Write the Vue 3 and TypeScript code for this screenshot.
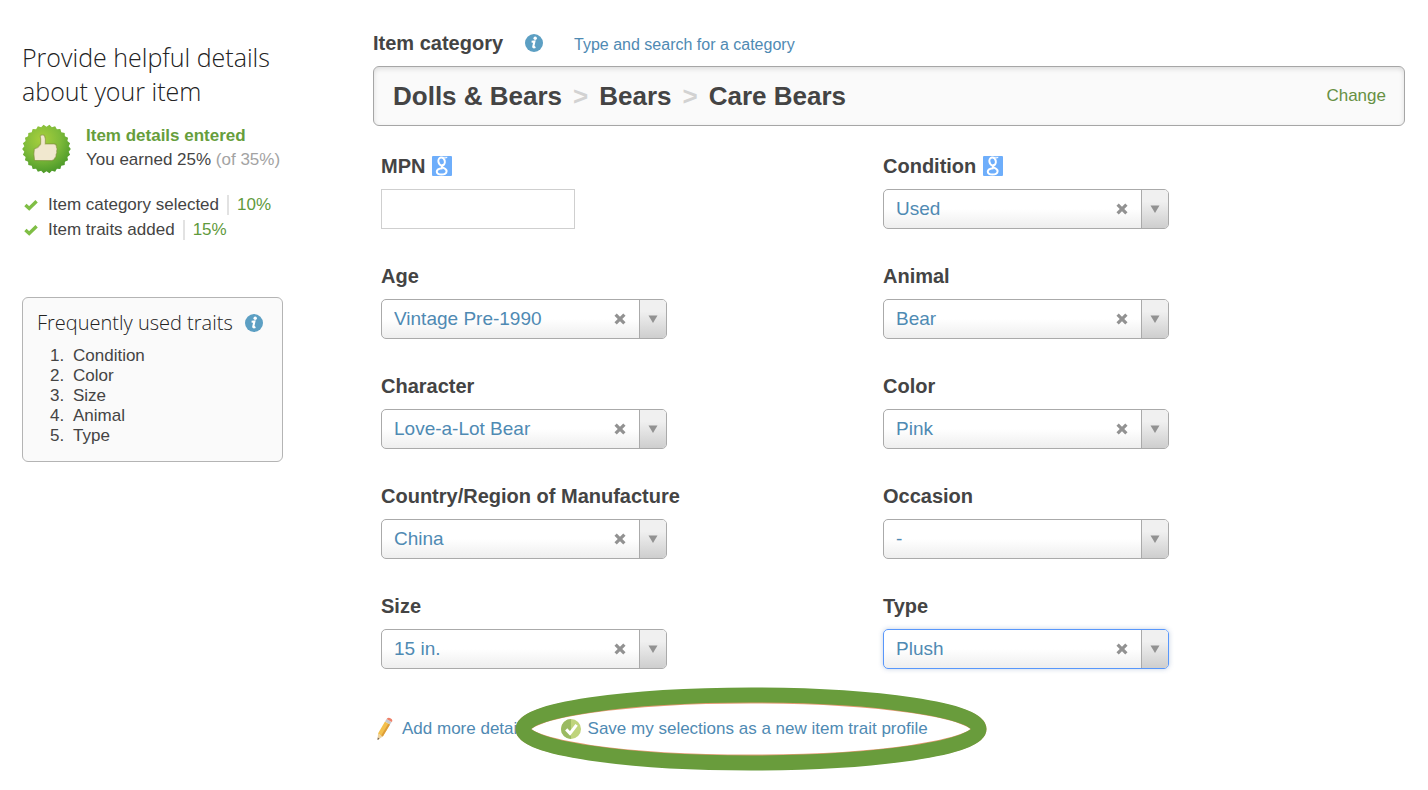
<script setup lang="ts">
import { reactive } from 'vue'

interface TraitField {
  id: string
  label: string
  kind: 'text' | 'select'
  value: string
  options?: string[]
  lookup?: boolean
  active?: boolean
}

const fields = reactive<TraitField[]>([
  { id: 'mpn', label: 'MPN', kind: 'text', value: '', lookup: true },
  { id: 'condition', label: 'Condition', kind: 'select', value: 'Used', options: ['Used'], lookup: true },
  { id: 'age', label: 'Age', kind: 'select', value: 'Vintage Pre-1990', options: ['Vintage Pre-1990'] },
  { id: 'animal', label: 'Animal', kind: 'select', value: 'Bear', options: ['Bear'] },
  { id: 'character', label: 'Character', kind: 'select', value: 'Love-a-Lot Bear', options: ['Love-a-Lot Bear'] },
  { id: 'color', label: 'Color', kind: 'select', value: 'Pink', options: ['Pink'] },
  { id: 'country', label: 'Country/Region of Manufacture', kind: 'select', value: 'China', options: ['China'] },
  { id: 'occasion', label: 'Occasion', kind: 'select', value: '-', options: [] },
  { id: 'size', label: 'Size', kind: 'select', value: '15 in.', options: ['15 in.'] },
  { id: 'type', label: 'Type', kind: 'select', value: 'Plush', options: ['Plush'], active: true },
])

const category = ['Dolls & Bears', 'Bears', 'Care Bears']
const progress = [
  { text: 'Item category selected', percent: '10%' },
  { text: 'Item traits added', percent: '15%' },
]
const frequent = ['Condition', 'Color', 'Size', 'Animal', 'Type']

// Scalloped rim of the badge: alternating outer and inner radii.
const teeth = 26
const badgePoints = Array.from({ length: teeth * 2 }, (_, i) => {
  const r = i % 2 === 0 ? 24.8 : 22.8
  const a = (Math.PI * i) / teeth
  return `${(25 + r * Math.cos(a)).toFixed(2)},${(25 + r * Math.sin(a)).toFixed(2)}`
}).join(' ')
</script>

<template>
  <div class="page">
    <aside class="sidebar">
      <h1>Provide helpful details about your item</h1>

      <div class="earned">
        <svg class="badge" viewBox="0 0 50 50" aria-hidden="true">
          <defs>
            <radialGradient id="badgeFill" cx="0.4" cy="0.3" r="0.75">
              <stop offset="0" stop-color="#a8cf3c" />
              <stop offset="0.5" stop-color="#7fbb3a" />
              <stop offset="1" stop-color="#459527" />
            </radialGradient>
          </defs>
          <polygon :points="badgePoints" fill="url(#badgeFill)" />
          <path
            d="M12.6 25 Q17 23.5 19 20 Q19.4 14.5 18.6 11.8 Q20.5 9.6 22.8 11.3 Q24.6 14.5 23.8 19.8 L33 19.8 Q35.8 20.6 35.2 23.2 Q36.4 25 35.4 27 Q36 29 34.8 30.6 Q35.2 33 33.6 34.2 Q33 36.6 30.5 36.8 L12.8 36.6 Q11.4 30 12.6 25 Z"
            fill="#f1e8cf"
            stroke="#7d8a3a"
            stroke-opacity="0.55"
            stroke-width="1.2"
          />
        </svg>
        <p>
          <strong>Item details entered</strong><br />
          You earned 25% <span class="muted">(of 35%)</span>
        </p>
      </div>

      <ul class="progress">
        <li v-for="p in progress" :key="p.text">
          <svg viewBox="0 0 14 12" aria-hidden="true">
            <path d="M1.4 6 L5.2 9.4 L12.6 2.2" fill="none" stroke="#7fbe45" stroke-width="3.4" />
          </svg>
          <span>{{ p.text }}</span>
          <span class="percent">{{ p.percent }}</span>
        </li>
      </ul>

      <section class="frequent">
        <h2>
          Frequently used traits
          <svg class="info" viewBox="0 0 18 18" aria-hidden="true">
            <circle cx="9" cy="9" r="9" fill="#5c9fc3" />
            <circle cx="10.2" cy="4.3" r="1.7" fill="#fff" />
            <path d="M6.6 7.7 L9.4 7.5 L8.2 13 Q8.5 13.8 10.4 13" fill="none" stroke="#fff" stroke-width="2.1" />
          </svg>
        </h2>
        <ol>
          <li v-for="name in frequent" :key="name">{{ name }}</li>
        </ol>
      </section>
    </aside>

    <main>
      <header class="category-head">
        <h2>Item category</h2>
        <svg class="info" viewBox="0 0 18 18" aria-hidden="true">
          <circle cx="9" cy="9" r="9" fill="#5c9fc3" />
          <circle cx="10.2" cy="4.3" r="1.7" fill="#fff" />
          <path d="M6.6 7.7 L9.4 7.5 L8.2 13 Q8.5 13.8 10.4 13" fill="none" stroke="#fff" stroke-width="2.1" />
        </svg>
        <a href="#search">Type and search for a category</a>
      </header>

      <nav class="category-bar" aria-label="Item category">
        <div class="crumbs">
          <template v-for="(c, i) in category" :key="c">
            <span v-if="i > 0" class="sep">&gt;</span>
            <span>{{ c }}</span>
          </template>
        </div>
        <a href="#change">Change</a>
      </nav>

      <form class="fields" @submit.prevent>
        <div v-for="f in fields" :key="f.id" class="field">
          <label :for="f.id">
            {{ f.label }}
            <svg v-if="f.lookup" class="lookup" viewBox="0 0 20 20" aria-hidden="true">
              <rect width="20" height="20" rx="1" fill="#6eaefb" />
              <g fill="none" stroke="#fff">
                <ellipse cx="9.6" cy="5.4" rx="3.2" ry="4" stroke-width="2" transform="rotate(-12 9.6 5.4)" />
                <path d="M9.6 1.3 L15.2 1.3 L13.4 2.3" stroke-width="0.9" />
                <path d="M12 8 C11.4 9.6 9.2 9.6 9.8 10.8 C10.4 12 14.8 12.4 14.6 15.2 C14.4 17.6 11.8 18.6 9.4 18.6 C6.6 18.6 4.8 17.4 4.8 15.6 C4.8 13.4 7.4 12.4 10.6 12.2" stroke-width="2" />
              </g>
            </svg>
          </label>
          <input v-if="f.kind === 'text'" :id="f.id" v-model="f.value" type="text" />
          <div v-else class="combo" :class="{ active: f.active }">
            <select :id="f.id" v-model="f.value">
              <option value="-">-</option>
              <option v-for="o in f.options" :key="o" :value="o">{{ o }}</option>
            </select>
            <button
              v-if="f.value !== '-'"
              type="button"
              :aria-label="`Clear ${f.label}`"
              @click="f.value = '-'"
            >
              <svg viewBox="0 0 12 12" aria-hidden="true">
                <path d="M1.6 1.6 L10.4 10.4 M10.4 1.6 L1.6 10.4" stroke="#929292" stroke-width="3.2" />
              </svg>
            </button>
            <span class="arrow">
              <svg viewBox="0 0 10 8" aria-hidden="true">
                <path d="M0.5 0.5 H9.5 L5 8 Z" fill="#929292" />
              </svg>
            </span>
          </div>
        </div>
      </form>

      <footer>
        <a href="#more" class="more">
          <svg class="pencil" viewBox="0 0 18 24" aria-hidden="true">
            <path d="M1.6 23 L2 16.6 L6.8 19.6 Z" fill="#ecd2a0" />
            <path d="M1.6 23 L1.7 20.6 L3.5 21.8 Z" fill="#6b5a48" />
            <path d="M2 16.6 L9 4.6 L14 7.6 L6.8 19.6 Z" fill="#f3c04c" />
            <path d="M5.2 18.6 L12.4 6.6 L14 7.6 L6.8 19.6 Z" fill="#dc9c38" />
            <path d="M9 4.6 L10.6 2 L15.6 5 L14 7.6 Z" fill="#c6c9cc" />
            <path d="M10.6 2 Q12.2 0 14.8 1.4 Q17.4 3 15.6 5 Z" fill="#ee8069" />
          </svg>
          Add more details
        </a>
        <a href="#save" class="save">
          <svg class="saved" viewBox="0 0 20 20" aria-hidden="true">
            <circle cx="10" cy="10" r="10" fill="#bfd47c" />
            <path d="M10 0 A10 10 0 0 0 10 20 Z" fill="#9aba62" />
            <path d="M5.2 10.4 L9 14.4 L15.6 5.8" fill="none" stroke="#fff" stroke-width="3" />
          </svg>
          Save my selections as a new item trait profile
          <svg class="ring" viewBox="0 0 472 84" preserveAspectRatio="none" aria-hidden="true">
            <ellipse cx="236" cy="42" rx="228" ry="33" fill="none" stroke="#e39a72" stroke-width="15" />
            <ellipse cx="236" cy="42" rx="228" ry="34" fill="none" stroke="#699c3c" stroke-width="15" />
          </svg>
        </a>
      </footer>
    </main>
  </div>
</template>

<style>
body {
  margin: 0;
  background: #fff;
}
</style>

<style scoped>
.page {
  display: grid;
  grid-template-columns: 264px 1fr;
  column-gap: 87px;
  padding: 30px 23px 30px 22px;
  font: 17px/24px "Liberation Sans", Arial, sans-serif;
  color: #444;
}
h1,
h2,
p,
ul,
ol {
  margin: 0;
  padding: 0;
}
ul,
ol {
  list-style: none;
}
a {
  color: #4f8ab3;
  text-decoration: none;
}
.sidebar {
  padding-top: 10px;
}
h1 {
  font: 300 25px/34px "Open Sans", sans-serif;
  color: #222;
}
.earned {
  display: flex;
  gap: 15px;
  margin-top: 16px;
  white-space: nowrap;
}
.badge {
  flex: none;
  width: 49px;
  height: 50px;
}
.earned strong {
  color: #669e3c;
}
.muted {
  color: #a3a3a3;
}
.progress {
  display: grid;
  gap: 1px;
  margin-top: 19px;
}
.progress li {
  display: flex;
  align-items: center;
}
.progress svg {
  width: 14px;
  height: 12px;
  margin: 0 10px 0 2px;
}
.percent {
  margin-left: 8px;
  padding-left: 8px;
  border-left: 2px solid #e2e2e2;
  line-height: 20px;
  color: #5f9a3c;
}
.frequent {
  width: 261px;
  box-sizing: border-box;
  margin-top: 55px;
  padding: 13px 14px 15px;
  border: 1px solid #b4b4b4;
  border-radius: 6px;
  background: #fafafa;
}
.frequent h2 {
  display: flex;
  align-items: center;
  gap: 12px;
  white-space: nowrap;
  font: 300 20px/24px "Open Sans", sans-serif;
  color: #222;
}
.info {
  flex: none;
  width: 18px;
  height: 18px;
}
.frequent ol {
  margin-top: 11px;
  padding-left: 13px;
  line-height: 20px;
  counter-reset: trait;
}
.frequent li {
  display: flex;
  counter-increment: trait;
}
.frequent li::before {
  content: counter(trait) ".";
  width: 23px;
}
.category-head {
  display: flex;
  align-items: center;
  height: 26px;
  margin-bottom: 10px;
}
.category-head h2 {
  font-size: 20px;
}
.category-head .info {
  margin: 0 31px 0 22px;
}
.category-head a {
  font-size: 16px;
  padding-top: 3px;
}
.category-bar {
  display: flex;
  align-items: center;
  justify-content: space-between;
  padding: 13px 18px 13px 19px;
  border: 1px solid #a6a6a6;
  border-radius: 6px;
  background: #fafafa;
  box-shadow: inset 0 2px 5px rgba(0, 0, 0, 0.12);
}
.crumbs {
  display: flex;
  gap: 11px;
  font-size: 26px;
  line-height: 32px;
  font-weight: 700;
}
.sep {
  color: #d2d2d2;
}
.category-bar a {
  color: #669043;
}
.fields {
  display: grid;
  grid-template-columns: 1fr 1fr;
  row-gap: 35px;
  padding: 28px 20px 0 8px;
}
.field label {
  display: flex;
  align-items: center;
  gap: 7px;
  margin-bottom: 11px;
  font-size: 20px;
  font-weight: 700;
}
.lookup {
  width: 20px;
  height: 20px;
}
.field input {
  box-sizing: border-box;
  display: block;
  width: 194px;
  height: 40px;
  padding: 0 12px;
  border: 1px solid #cfcfcf;
  font: 19px "Liberation Sans", Arial, sans-serif;
  color: #4f8ab3;
}
.combo {
  position: relative;
  box-sizing: border-box;
  width: 286px;
  height: 40px;
  border: 1px solid #aaa;
  border-radius: 5px;
  background: linear-gradient(#fff 50%, #eee);
}
.combo.active {
  border-color: #5897fb;
  box-shadow: 0 0 5px rgba(60, 100, 160, 0.3);
}
.combo select {
  appearance: none;
  display: block;
  width: 100%;
  height: 100%;
  padding: 0 60px 2px 12px;
  border: 0;
  outline: 0;
  background: transparent;
  font: 19px "Liberation Sans", Arial, sans-serif;
  color: #4f8ab3;
}
.combo button {
  position: absolute;
  top: 0;
  right: 34px;
  display: grid;
  place-items: center;
  width: 24px;
  height: 38px;
  padding: 0;
  border: 0;
  background: none;
}
.combo button svg {
  width: 12px;
  height: 12px;
}
.arrow {
  position: absolute;
  top: 0;
  right: 0;
  display: grid;
  place-items: center;
  width: 26px;
  height: 38px;
  border-left: 1px solid #aaa;
  border-radius: 0 4px 4px 0;
  background: linear-gradient(#f0f0f0 30%, #cecece);
  pointer-events: none;
}
.arrow svg {
  width: 10px;
  height: 8px;
}
footer {
  display: flex;
  gap: 31px;
  margin-top: 48px;
  padding-left: 3px;
  white-space: nowrap;
}
footer a {
  display: flex;
  align-items: center;
}
.pencil {
  width: 18px;
  height: 24px;
  margin-right: 8px;
}
.save {
  position: relative;
}
.saved {
  width: 20px;
  height: 20px;
  margin-right: 7px;
}
.ring {
  position: absolute;
  top: -30px;
  left: -46px;
  width: 472px;
  height: 84px;
  pointer-events: none;
}
</style>
